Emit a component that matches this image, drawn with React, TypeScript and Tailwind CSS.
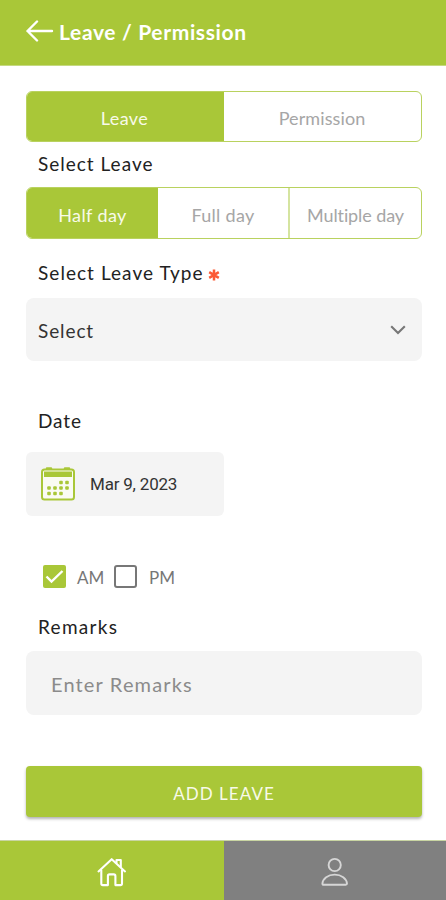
import React from "react";

const lato = "font-['Lato','Open_Sans',sans-serif]";

function BackArrow() {
  return (
    <svg width="28" height="22" viewBox="0 0 28 22" fill="none" stroke="#fff" strokeWidth="2.4" strokeLinecap="round" strokeLinejoin="round">
      <path d="M26 11H1.500M11 1.500L1.500 11l9.500 9.500" />
    </svg>
  );
}

function CalendarIcon() {
  const dots = [
    [20, 15.5], [26, 15.5],
    [8, 21], [14, 21], [20, 21], [26, 21],
    [8, 26.5], [14, 26.5], [20, 26.5],
  ];
  return (
    <svg width="34" height="34" viewBox="0 0 34 34" fill="none">
      <rect x="1" y="2.500" width="32" height="30" rx="2.500" fill="#fafbf3" stroke="#a9c738" strokeWidth="2" />
      <rect x="3" y="4.500" width="28" height="5.500" fill="#a9c738" />
      <path d="M6 1.500h4M24 1.500h4" stroke="#a9c738" strokeWidth="2.500" strokeLinecap="round" />
      {dots.map(([x, y]) => (
        <rect key={`${x}-${y}`} x={x - 1.8} y={y - 1.8} width="3.600" height="3.600" rx="1" fill="#a9c738" />
      ))}
    </svg>
  );
}

function HomeIcon() {
  return (
    <svg width="30" height="30" viewBox="0 0 30 30" fill="none" stroke="#fff" strokeWidth="2.100" strokeLinejoin="round" strokeLinecap="round">
      <path d="M4.300 13.200v13.300q0 1.600 1.600 1.600h5V19q0-1.600 1.600-1.600h4.300q1.600 0 1.600 1.600v9.100h5q1.600 0 1.600-1.600V13.200" />
      <path d="M1.500 14.400L14.700 2.200l13.300 12.200" />
      <path d="M19.500 5.800V3h4.300v6.800" />
    </svg>
  );
}

function UserIcon() {
  return (
    <svg width="28" height="30" viewBox="0 0 28 30" fill="none" stroke="#d6d6d6" strokeWidth="1.900" strokeLinejoin="round">
      <circle cx="13.700" cy="8" r="6.100" />
      <path d="M1.400 26.600c.4-5.200 5.600-9 12.300-9s11.900 3.800 12.300 9q0 1.200-1.200 1.200H2.600q-1.200 0-1.200-1.200z" />
    </svg>
  );
}

export default function App() {
  return (
    <div className={`${lato} flex h-[900px] w-[446px] flex-col overflow-hidden bg-white text-[#222]`}>
      <header className="flex h-[66px] shrink-0 items-center border-b border-[#c5d980] bg-[#a9c738] pl-[26px] text-white">
        <div className="-mt-[4px]"><BackArrow /></div>
        <h1 className="-mt-[1px] ml-[5px] text-[21px] leading-6 font-bold tracking-[0.650px] whitespace-nowrap">Leave / Permission</h1>
      </header>

      <main className="flex h-[774px] shrink-0 flex-col pr-[24px] pl-[26px]">
        <div className="mt-[25px] flex h-[51px] shrink-0 overflow-hidden rounded-[6px] border border-[#b9d25f] text-[18px]">
          <button className="flex w-[197px] items-center justify-center bg-[#a9c738] pt-[3px] pr-[2px] tracking-[0.400px] text-[#f8fae9]">Leave</button>
          <button className="flex flex-1 items-center justify-center pt-[3px] pr-[1px] tracking-[0.100px] text-[#a6a6a6]">Permission</button>
        </div>
        <div className="mt-[10px] h-6 shrink-0 pl-3 text-[19px] leading-6 tracking-[1px]">Select Leave</div>
        <div className="mt-[11px] flex h-[52px] shrink-0 overflow-hidden rounded-[6px] border border-[#b9d25f] text-[18px]">
          <button className="flex w-[131px] items-center justify-center bg-[#a9c738] pt-[4px] tracking-[0.400px] text-[#f8fae9]">Half day</button>
          <button className="flex w-[132px] items-center justify-center border-r-2 border-[#d5e4a0] pt-[4px] tracking-[0.300px] text-[#a6a6a6]">Full day</button>
          <button className="flex flex-1 items-center justify-center pt-[4px] tracking-[-0.100px] text-[#a6a6a6]">Multiple day</button>
        </div>
        <div className="mt-[22px] flex h-6 shrink-0 items-center pl-3 text-[19px] leading-6">
          <span className="tracking-[1.050px]">Select Leave Type</span>
          <svg className="mt-1 ml-[4px]" width="12" height="12" viewBox="0 0 12 12" stroke="#fb5a35" strokeWidth="2.500">
            <path d="M6 .5v11M1.200 3.200l9.600 5.600M10.800 3.200L1.200 8.800" />
          </svg>
        </div>
        <div className="mt-[13px] flex h-[63px] shrink-0 items-center justify-between rounded-[8px] bg-[#f4f4f4] pr-[16px] pl-3 text-[19px] text-[#333]">
          <span className="pt-[3px] tracking-[0.900px]">Select</span>
          <svg width="16" height="10" viewBox="0 0 16 10" fill="none" stroke="#777" strokeWidth="2.100">
            <path d="M1.200 1.200L8 8l6.800-6.800" />
          </svg>
        </div>
        <div className="mt-[48px] h-6 shrink-0 pl-3 text-[19px] leading-6 tracking-[0.900px]">Date</div>
        <div className="mt-[19px] flex h-[64px] w-[198px] shrink-0 items-center rounded-[6px] bg-[#f4f4f4] pl-[15px]">
          <CalendarIcon />
          <span className="ml-[15px] pt-[2px] font-['Roboto',sans-serif] text-[17px] tracking-[-0.200px] text-[#333]">Mar 9, 2023</span>
        </div>
        <div className="mt-[48px] flex h-[24px] shrink-0 items-center pl-[17px] text-[17px] text-[#777]">
          <span className="flex h-[23px] w-[23px] items-center justify-center rounded-[2px] bg-[#a9c738]">
            <svg width="19" height="15" viewBox="0 0 19 15" fill="none" stroke="#fff" strokeWidth="2.400"><path d="M1.500 7.500l5 5L17.500 2" /></svg>
          </span>
          <span className="ml-[11px] w-[37px] pt-[4px]">AM</span>
          <span className="h-[23px] w-[23px] rounded-[3px] border-2 border-[#777]" />
          <span className="ml-[12px] pt-[4px]">PM</span>
        </div>
        <div className="mt-[27px] h-6 shrink-0 pl-3 text-[19px] leading-6 tracking-[1.300px]">Remarks</div>
        <div className="mt-[12px] flex h-[64px] shrink-0 items-center rounded-[8px] bg-[#f4f4f4] pt-[1px] pl-[25px] text-[20px] tracking-[1.150px] text-[#8b8b8b]">Enter Remarks</div>
        <button className="mt-[51px] flex h-[51px] shrink-0 items-center justify-center rounded-[4px] bg-[#a9c738] pt-[4px] text-[17px] tracking-[1.050px] text-[#f8fae9] shadow-[0_2px_3px_rgba(0,0,0,0.3)]">ADD LEAVE</button>
      </main>

      <nav className="flex h-[60px] shrink-0 border-t border-[#c9d5a3]">
        <div className="flex w-[224px] items-center justify-center bg-[#a9c738] pt-[2px]"><HomeIcon /></div>
        <div className="flex flex-1 items-center justify-center bg-[#808080] pt-[2px]"><UserIcon /></div>
      </nav>
    </div>
  );
}
